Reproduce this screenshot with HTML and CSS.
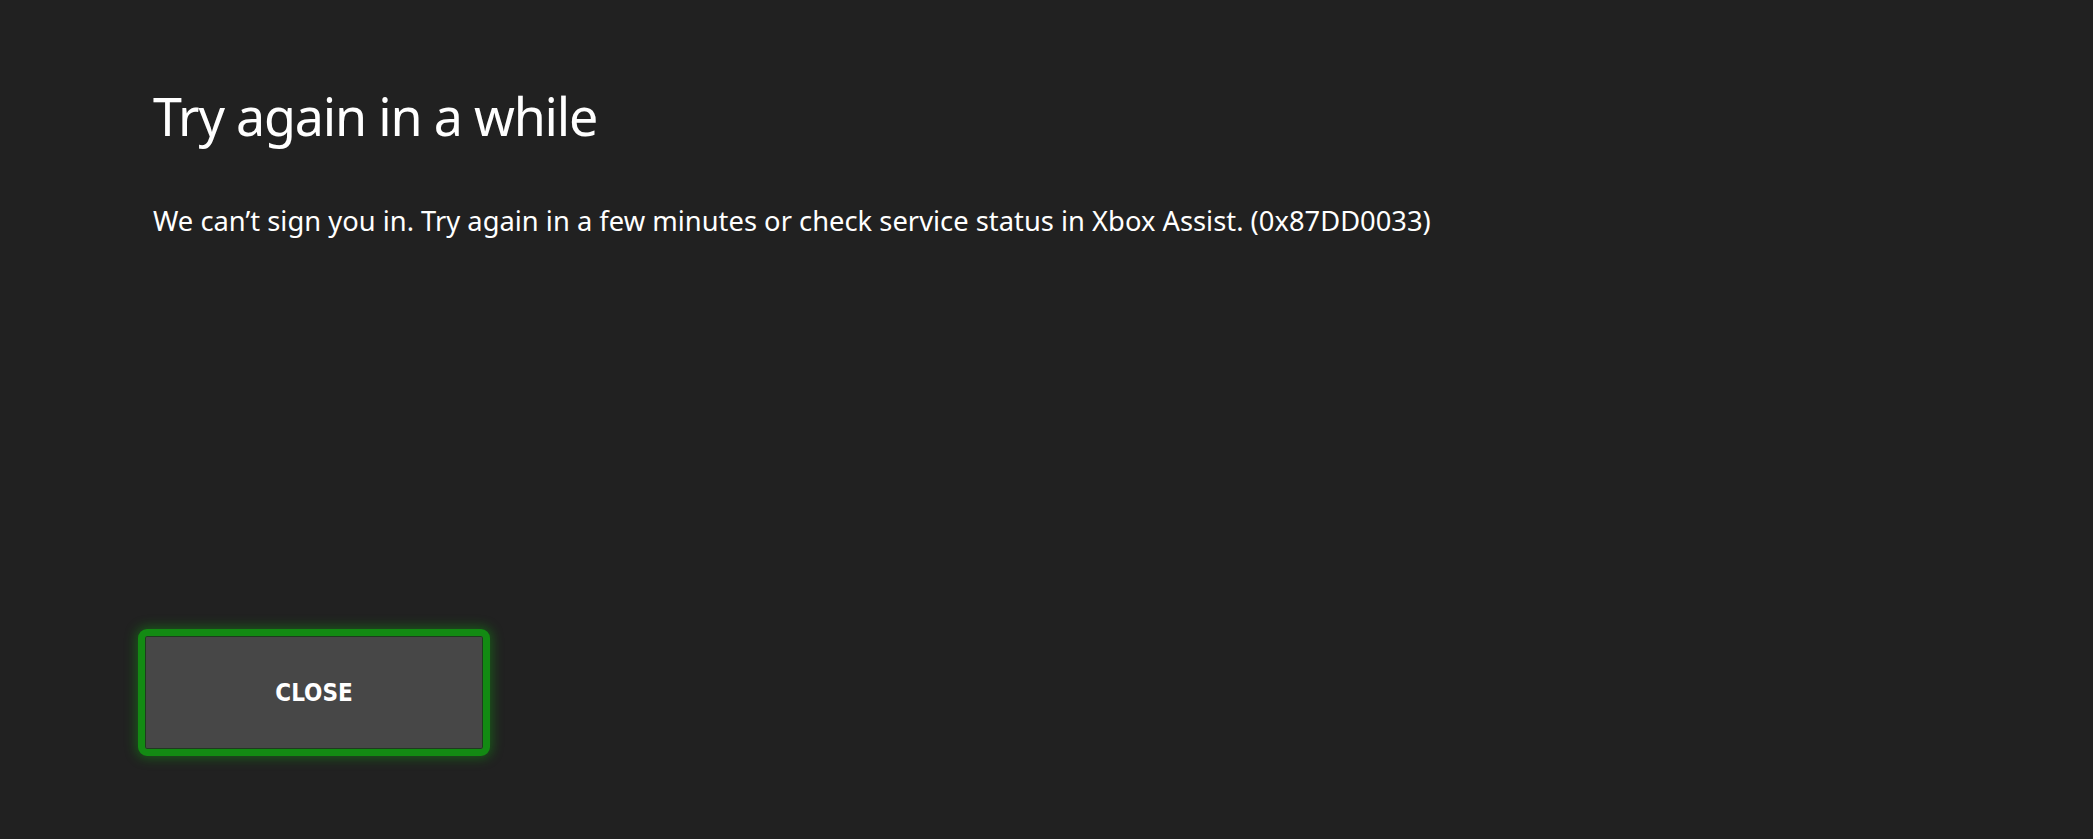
FILE: index.html
```html
<!DOCTYPE html>
<html lang="en">
<head>
<meta charset="utf-8">
<title>Try again in a while</title>
<link rel="stylesheet" href="styles.css">
</head>
<body>
<main class="dialog">
  <div class="content">
    <h1 class="title">Try again in a while</h1>
    <p class="message">We can’t sign you in. Try again in a few minutes or check service status in Xbox Assist. (0x87DD0033)</p>
  </div>
  <button class="close-btn" type="button">CLOSE</button>
</main>
</body>
</html>
```
FILE: styles.css
```css
html, body {
  margin: 0;
  padding: 0;
  background: #212121;
  height: 100%;
}
body {
  font-family: "Noto Sans", "Open Sans", sans-serif;
  color: #ffffff;
}
.dialog {
  display: flex;
  flex-direction: column;
  align-items: flex-start;
  padding: 84px 0 0 138px;
}
.content {
  padding-left: 15px;
}
.title {
  margin: 0;
  font-size: 52px;
  font-weight: 400;
  line-height: 64px;
  letter-spacing: -1.2px;
}
.message {
  margin: 55px 0 0 0;
  font-size: 27.3px;
  line-height: 36px;
  font-weight: 400;
  letter-spacing: 0.02px;
}
.close-btn {
  margin-top: 390px;
  width: 352px;
  height: 127px;
  box-sizing: border-box;
  border: 7px solid #138a13;
  border-radius: 9px;
  background: #474747;
  color: #ffffff;
  font-family: "DejaVu Sans", sans-serif;
  font-stretch: condensed;
  font-weight: 700;
  font-size: 24px;
  letter-spacing: 0;
  padding: 0;
  box-shadow: 0 0 12px 2px rgba(16, 160, 16, 0.45), inset 0 0 0 1px #1f3a1f;
  cursor: pointer;
}
```
